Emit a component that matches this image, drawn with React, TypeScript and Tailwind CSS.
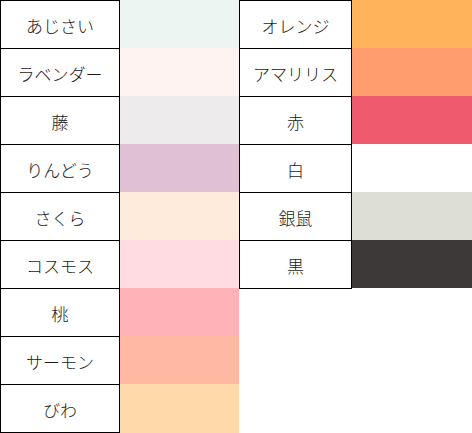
const left = [
  { name: "あじさい", color: "#edf5f3" },
  { name: "ラベンダー", color: "#fff3f1" },
  { name: "藤", color: "#eeebec" },
  { name: "りんどう", color: "#dfc0d5" },
  { name: "さくら", color: "#ffebdc" },
  { name: "コスモス", color: "#ffdce1" },
  { name: "桃", color: "#ffb3b9" },
  { name: "サーモン", color: "#ffb9a2" },
  { name: "びわ", color: "#ffd9aa" },
];

const right = [
  { name: "オレンジ", color: "#ffb35b" },
  { name: "アマリリス", color: "#ff9d6f" },
  { name: "赤", color: "#ef5a6e" },
  { name: "白", color: "#ffffff" },
  { name: "銀鼠", color: "#dedfd4" },
  { name: "黒", color: "#3d3938" },
];

function ColorRow({
  name,
  color,
  labelWidth,
  swatchWidth,
}: {
  name: string;
  color: string;
  labelWidth: string;
  swatchWidth: string;
}) {
  return (
    <div className="flex h-[48px]">
      <div
        className={`${labelWidth} flex items-center justify-center border-x border-t border-black pt-px`}
      >
        {name}
      </div>
      <div className={swatchWidth} style={{ backgroundColor: color }} />
    </div>
  );
}

export default function App() {
  return (
    <div
      className="flex w-[472px] items-start bg-white text-[17px] font-light leading-none text-[#1a1a1a]"
      style={{ fontFamily: '"Noto Sans CJK JP", "Noto Sans", sans-serif' }}
    >
      <div className="flex flex-col">
        {left.map((c) => (
          <ColorRow
            key={c.name}
            name={c.name}
            color={c.color}
            labelWidth="w-[120px]"
            swatchWidth="w-[119px]"
          />
        ))}
        <div className="flex h-px">
          <div className="w-[120px] bg-black" />
          <div className="w-[119px] bg-[#ffd9aa]" />
        </div>
      </div>
      <div className="flex flex-col">
        {right.map((c) => (
          <ColorRow
            key={c.name}
            name={c.name}
            color={c.color}
            labelWidth="w-[113px]"
            swatchWidth="w-[120px]"
          />
        ))}
        <div className="h-px w-[113px] bg-black" />
      </div>
    </div>
  );
}
